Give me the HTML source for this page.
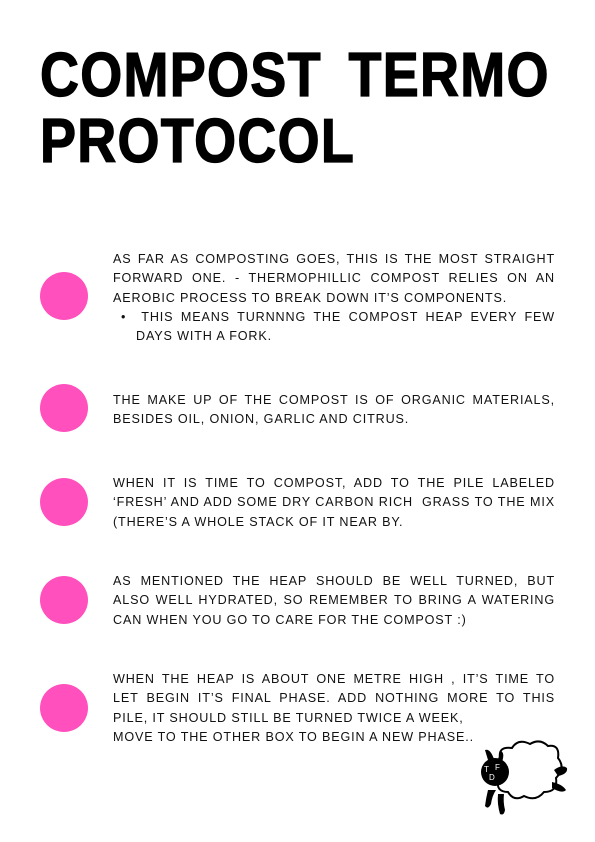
<!DOCTYPE html>
<html><head><meta charset="utf-8"><style>
body{margin:0;background:#fff;width:595px;height:842px;position:relative;overflow:hidden;font-family:"Liberation Sans",sans-serif;color:#111}
.t{position:absolute;left:40px;font-weight:bold;font-size:62px;line-height:62px;transform:scaleX(.87);transform-origin:left top;white-space:nowrap;color:#000;-webkit-text-stroke:1.3px #000;letter-spacing:1.5px}
.c{position:absolute;left:40px;width:48px;height:48px;border-radius:50%;background:#ff50be}
.b{position:absolute;left:113px;width:442px;font-size:12.6px;line-height:19.3px;letter-spacing:0.85px}
.b div{white-space:nowrap}
.j{text-align:justify;text-align-last:justify}
</style></head><body>
<div class="t" style="top:45px;width:586px;text-align:justify;text-align-last:justify">COMPOST TERMO</div>
<div class="t" style="top:111px">PROTOCOL</div>

<div class="c" style="top:272px"></div>
<div class="b" style="top:250px">
<div class="j">AS FAR AS COMPOSTING GOES, THIS IS THE MOST STRAIGHT</div>
<div class="j">FORWARD ONE. - THERMOPHILLIC COMPOST RELIES ON AN</div>
<div>AEROBIC PROCESS TO BREAK DOWN IT’S COMPONENTS.</div>
<div class="j" style="padding-left:8px;width:434px"><span>•&nbsp;&nbsp;</span>THIS MEANS TURNNNG THE COMPOST HEAP EVERY FEW</div>
<div style="padding-left:23px">DAYS WITH A FORK.</div>
</div>

<div class="c" style="top:384px"></div>
<div class="b" style="top:391px">
<div class="j">THE MAKE UP OF THE COMPOST IS OF ORGANIC MATERIALS,</div>
<div>BESIDES OIL, ONION, GARLIC AND CITRUS.</div>
</div>

<div class="c" style="top:478px"></div>
<div class="b" style="top:474px">
<div class="j">WHEN IT IS TIME TO COMPOST, ADD TO THE PILE LABELED</div>
<div class="j">‘FRESH’ AND ADD SOME DRY CARBON RICH&nbsp; GRASS TO THE MIX</div>
<div>(THERE’S A WHOLE STACK OF IT NEAR BY.</div>
</div>

<div class="c" style="top:576px"></div>
<div class="b" style="top:572px">
<div class="j">AS MENTIONED THE HEAP SHOULD BE WELL TURNED, BUT</div>
<div class="j">ALSO WELL HYDRATED, SO REMEMBER TO BRING A WATERING</div>
<div>CAN WHEN YOU GO TO CARE FOR THE COMPOST :)</div>
</div>

<div class="c" style="top:684px"></div>
<div class="b" style="top:670px">
<div class="j">WHEN THE HEAP IS ABOUT ONE METRE HIGH , IT’S TIME TO</div>
<div class="j">LET BEGIN IT’S FINAL PHASE. ADD NOTHING MORE TO THIS</div>
<div>PILE, IT SHOULD STILL BE TURNED TWICE A WEEK,</div>
<div>MOVE TO THE OTHER BOX TO BEGIN A NEW PHASE..</div>
</div>

<svg style="position:absolute;left:470px;top:730px" width="110" height="90" viewBox="0 0 110 90">
<path d="M30 28 Q28 16 42 18 Q48 8 60 14 Q70 8 78 16 Q90 14 88 28 Q96 38 86 48 Q88 62 74 62 Q66 72 54 66 Q44 72 38 62 Q26 62 28 50 Q20 40 30 28 Z" fill="#fff" stroke="#000" stroke-width="2"/>
<ellipse cx="25" cy="42" rx="14" ry="14" fill="#000"/>
<path d="M18 30 L15 20 Q20 18 24 29Z M28 29 L31 21 Q35 23 32 32Z" fill="#000"/>
<text x="14" y="42" font-size="8" fill="#fff" font-family="Liberation Sans">T</text>
<text x="25" y="40" font-size="8" fill="#fff" font-family="Liberation Sans">F</text>
<text x="19" y="50" font-size="8" fill="#fff" font-family="Liberation Sans">D</text>
<path d="M84 40 Q92 34 97 38 Q98 44 88 46Z M82 52 Q92 54 96 60 Q92 64 82 58Z" fill="#000"/>
<path d="M18 60 Q16 68 15 76 Q18 80 21 74 Q22 66 26 60Z M28 64 Q27 74 30 84 Q34 86 35 80 Q33 72 34 64Z" fill="#000"/>
</svg>
</body></html>
